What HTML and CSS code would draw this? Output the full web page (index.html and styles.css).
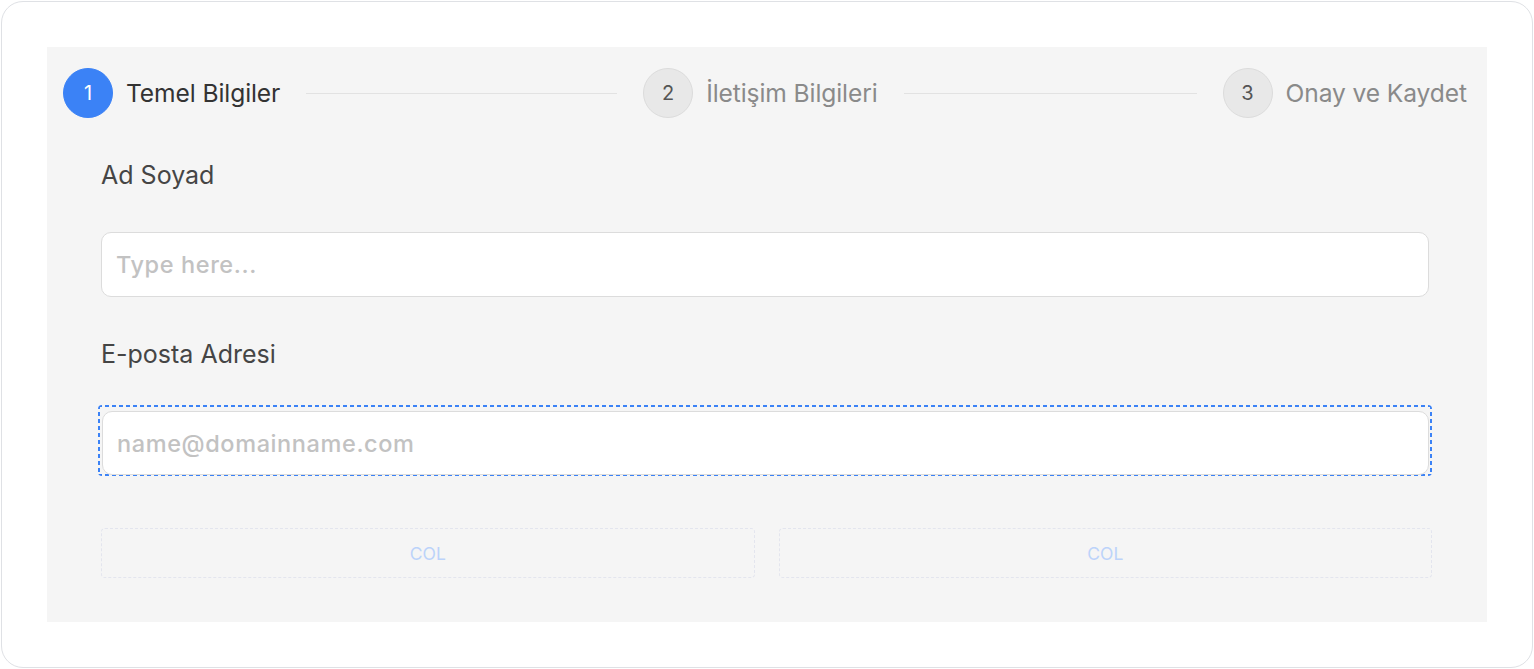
FILE: index.html
```html
<!DOCTYPE html>
<html lang="tr">
<head>
<meta charset="utf-8">
<title>Form</title>
<link rel="stylesheet" href="styles.css">
</head>
<body>
<div class="card">
  <div class="panel">
    <div class="stepper">
      <div class="step active"><span class="num">1</span><span class="label">Temel Bilgiler</span></div>
      <div class="line line-a"></div>
      <div class="step"><span class="num">2</span><span class="label">İletişim Bilgileri</span></div>
      <div class="line line-b"></div>
      <div class="step"><span class="num">3</span><span class="label">Onay ve Kaydet</span></div>
    </div>
    <div class="form">
      <label class="field-label">Ad Soyad</label>
      <input class="input" type="text" placeholder="Type here...">
      <label class="field-label second">E-posta Adresi</label>
      <div class="focus-wrap">
        <input class="input" type="email" placeholder="name@domainname.com">
      </div>
      <div class="cols">
        <div class="col">COL</div>
        <div class="col">COL</div>
      </div>
    </div>
  </div>
</div>
</body>
</html>
```
FILE: styles.css
```css
* { box-sizing: border-box; }
html, body { margin: 0; padding: 0; background: #ffffff; }
body { width: 1534px; height: 669px; padding: 1px; }
.card {
  width: 1532px;
  height: 667px;
  border: 1.5px solid #dfe1e5;
  border-radius: 22px;
  background: #ffffff;
  padding: 45px 45px 0 45px;
}
.panel {
  background: #f5f5f5;
  height: 575px;
  padding: 21px 20px 0 16px;
}
.stepper {
  display: flex;
  align-items: center;
  height: 50px;
  font-family: Inter, "Liberation Sans", sans-serif;
}
.step { display: flex; align-items: center; gap: 13px; }
.num {
  width: 50px; height: 50px;
  border-radius: 50%;
  display: flex; align-items: center; justify-content: center;
  background: #e8e8e8;
  border: 1px solid #dcdcdc;
  color: #555555;
  font-size: 20px;
}
.step.active .num { background: #3b82f6; border-color: #3b82f6; color: #ffffff; }
.label { font-size: 24.6px; color: #8a8a8a; letter-spacing: -0.1px; }
.step.active .label { color: #333333; }
.line { height: 1px; background: #e2e2e2; margin: 0 26px; flex-basis: 0; }
.line-a { flex-grow: 311; }
.line-b { flex-grow: 293; }
.form {
  display: flex;
  flex-direction: column;
  padding: 42px 35px 0 38px;
  font-family: Inter, "Liberation Sans", sans-serif;
}
.field-label {
  font-size: 25px;
  line-height: 30px;
  color: #454545;
  margin-bottom: 42px;
}
.field-label.second { margin-top: 42px; margin-bottom: 36px; }
.input {
  width: calc(100% - 3px);
  height: 65px;
  border: 1px solid #dcdcdc;
  border-radius: 10px;
  background: #ffffff;
  padding: 0 14px;
  font-family: Inter, "Liberation Sans", sans-serif;
  font-size: 23.5px;
  letter-spacing: 0.6px;
  font-weight: 500;
  color: #333;
  outline: none;
}
.input::placeholder { color: #c2c2c2; }
.focus-wrap {
  margin-left: -3px;
  border-radius: 4px;
  padding: 6px 3px 1px 4px;
  background:
    repeating-linear-gradient(90deg, #3b82f6 0 4px, transparent 4px 7px) top left / 100% 2px no-repeat,
    repeating-linear-gradient(90deg, #3b82f6 0 4px, transparent 4px 7px) bottom left / 100% 2px no-repeat,
    repeating-linear-gradient(180deg, #3b82f6 0 4px, transparent 4px 7px) top left / 2px 100% no-repeat,
    repeating-linear-gradient(180deg, #3b82f6 0 4px, transparent 4px 7px) top right / 2px 100% no-repeat;
}
.focus-wrap .input { width: 100%; height: 64px; }
.cols {
  display: grid;
  grid-template-columns: 1fr 1fr;
  gap: 24px;
  margin-top: 52px;
}
.col {
  height: 50px;
  border: 1px dashed #e3e5ee;
  border-radius: 4px;
  display: flex; align-items: center; justify-content: center;
  color: #bcd3fa;
  font-size: 17.5px;
}
```
